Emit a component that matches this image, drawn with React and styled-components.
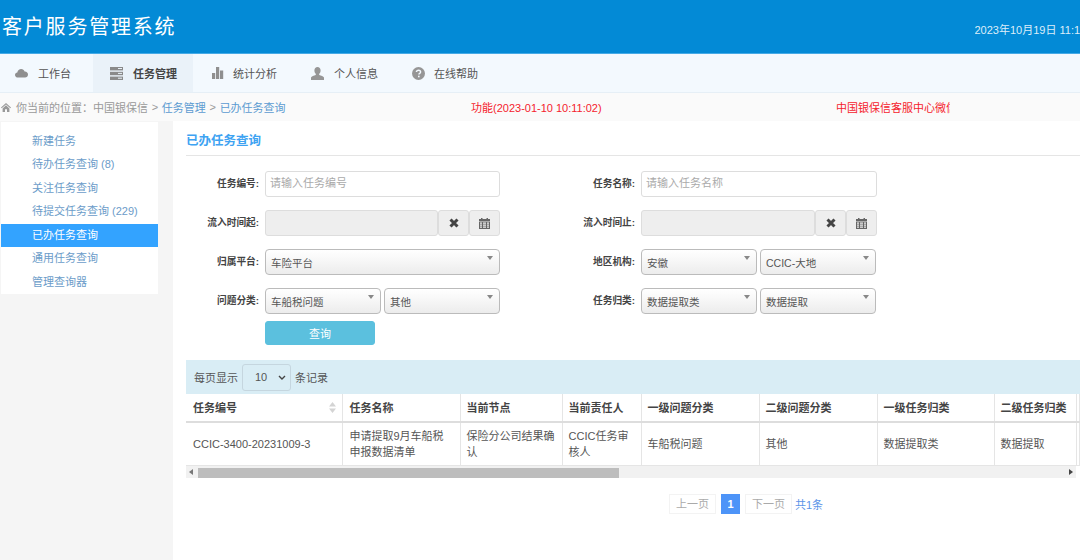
import React from 'react';
import styled, { createGlobalStyle } from 'styled-components';

const NAV_ITEMS = [
	{ label: '工作台', icon: 'cloud' },
	{ label: '任务管理', icon: 'server', active: true },
	{ label: '统计分析', icon: 'bars' },
	{ label: '个人信息', icon: 'user' },
	{ label: '在线帮助', icon: 'help' },
];

const MENU_ITEMS = [
	'新建任务',
	'待办任务查询 (8)',
	'关注任务查询',
	'待提交任务查询 (229)',
	'已办任务查询',
	'通用任务查询',
	'管理查询器',
];

const COLUMNS = [
	{ title: '任务编号', width: 156, value: 'CCIC-3400-20231009-3', sort: true },
	{ title: '任务名称', width: 118, value: '申请提取9月车船税申报数据清单' },
	{ title: '当前节点', width: 102, value: '保险分公司结果确认' },
	{ title: '当前责任人', width: 79, value: 'CCIC任务审核人' },
	{ title: '一级问题分类', width: 118, value: '车船税问题' },
	{ title: '二级问题分类', width: 118, value: '其他' },
	{ title: '一级任务归类', width: 117, value: '数据提取类' },
	{ title: '二级任务归类', width: 82, value: '数据提取' },
];

function NavIcon({ name }) {
	if (name === 'cloud') {
		return (
			<svg width='13' height='10' viewBox='0 0 13 10' fill='#8f8f8f'>
				<path d='M3 9.5C1.3 9.5 0 8.4 0 6.9c0-1.3 1-2.4 2.3-2.5C2.7 2.6 4.2 1 6.2 1c1.6 0 2.9 1 3.4 2.4 1.9-.2 3.4 1.2 3.4 3 0 1.7-1.3 3.1-3 3.1H3z' />
			</svg>
		);
	}
	if (name === 'server') {
		return (
			<svg width='13' height='13' viewBox='0 0 13 13' fill='#8a8a8a'>
				<rect x='0' y='0' width='13' height='3.4' />
				<rect x='0' y='4.8' width='13' height='3.4' />
				<rect x='0' y='9.6' width='13' height='3.4' />
				<rect x='8' y='1' width='4' height='1' fill='#eaf2f9' />
				<rect x='8' y='5.9' width='4' height='1' fill='#eaf2f9' />
				<rect x='8' y='10.7' width='4' height='1' fill='#eaf2f9' />
			</svg>
		);
	}
	if (name === 'bars') {
		return (
			<svg width='14' height='12' viewBox='-2 0 14 12' fill='#8f8f8f'>
				<rect x='0' y='6' width='3.2' height='6' />
				<rect x='4' y='0' width='3.2' height='12' />
				<rect x='8' y='3.5' width='3.2' height='8.5' />
			</svg>
		);
	}
	if (name === 'user') {
		return (
			<svg width='13' height='13' viewBox='0 0 13 13' fill='#969696'>
				<path d='M6.5 0C8.3 0 9.6 1.4 9.6 3.4c0 1.4-.6 2.7-1.4 3.4v1.1c1.9.6 4.3 1.4 4.8 2.5V13H0v-2.6c.5-1.1 2.9-1.9 4.8-2.5V6.8C4 6.1 3.4 4.8 3.4 3.4 3.4 1.4 4.7 0 6.5 0z' />
			</svg>
		);
	}
	return (
		<svg width='14' height='13' viewBox='-1 0 14 13'>
			<circle cx='6.5' cy='6.5' r='6.5' fill='#969696' />
			<path
				d='M4.4 5.1c0-1.2 1-1.9 2.1-1.9 1.2 0 2.1.7 2.1 1.8 0 1.4-1.7 1.4-1.7 2.6'
				fill='none'
				stroke='#f3f9fe'
				strokeWidth='1.4'
			/>
			<rect x='6' y='8.7' width='1.6' height='1.6' fill='#f3f9fe' />
		</svg>
	);
}

function HomeIcon() {
	return (
		<svg width='10' height='9' viewBox='0 0 10 9' fill='#999'>
			<path d='M5 0l5 4.6-.7.7L5 1.4.7 5.3 0 4.6 5 0zM1.6 5.4L5 2.3l3.4 3.1V9H6V6.2H4V9H1.6V5.4z' />
		</svg>
	);
}

function ClearIcon() {
	return (
		<svg width='10' height='10' viewBox='0 0 10 10' fill='none' stroke='#444' strokeWidth='3'>
			<path d='M1.5 1.5l7 7M8.5 1.5l-7 7' />
		</svg>
	);
}

function CalendarIcon() {
	return (
		<svg width='11' height='11' viewBox='0 0 11 11' fill='#666'>
			<rect x='2' y='0' width='1.5' height='1.6' />
			<rect x='7.5' y='0' width='1.5' height='1.6' />
			<rect x='0' y='1' width='11' height='2' />
			<path d='M0 3.6h11V11H0V3.6zm1 1v1.2h2V4.6H1zm3 0v1.2h3V4.6H4zm4 0v1.2h2V4.6H8zM1 6.6v1.2h2V6.6H1zm3 0v1.2h3V6.6H4zm4 0v1.2h2V6.6H8zM1 8.6v1.2h2V8.6H1zm3 0v1.2h3V8.6H4zm4 0v1.2h2V8.6H8z' fillRule='evenodd' />
		</svg>
	);
}

function DateField() {
	return (
		<DateGroup>
			<DateInput />
			<AddOn>
				<ClearIcon />
			</AddOn>
			<AddOn>
				<CalendarIcon />
			</AddOn>
		</DateGroup>
	);
}

function Pick({ value, width }) {
	return <PickBox $width={width}>{value}</PickBox>;
}

export default function App() {
	return (
		<Page>
			<GlobalStyle />
			<Header>
				<Brand>客户服务管理系统</Brand>
				<Clock>2023年10月19日 11:11:25</Clock>
			</Header>

			<Nav>
				{NAV_ITEMS.map((item) => (
					<NavItem key={item.label} $active={item.active}>
						<NavIconBox>
							<NavIcon name={item.icon} />
						</NavIconBox>
						{item.label}
					</NavItem>
				))}
			</Nav>

			<Crumbs>
				<Trail>
					<HomeIcon />
					<span>你当前的位置：中国银保信</span>
					<CrumbSep>&gt;</CrumbSep>
					<CrumbLink>任务管理</CrumbLink>
					<CrumbSep>&gt;</CrumbSep>
					<CrumbLink>已办任务查询</CrumbLink>
				</Trail>
				<Notice>功能(2023-01-10 10:11:02)</Notice>
				<Ticker>中国银保信客服中心微信公众号</Ticker>
			</Crumbs>

			<Body>
				<SideColumn>
					<Menu>
						{MENU_ITEMS.map((item) => (
							<MenuItem key={item} $active={item === '已办任务查询'}>
								{item}
							</MenuItem>
						))}
					</Menu>
				</SideColumn>

				<Main>
					<Title>已办任务查询</Title>

					<Form>
						<Label>任务编号:</Label>
						<TextInput placeholder='请输入任务编号' />
						<Label>任务名称:</Label>
						<TextInput placeholder='请输入任务名称' />

						<Label>流入时间起:</Label>
						<DateField />
						<Label>流入时间止:</Label>
						<DateField />

						<Label>归属平台:</Label>
						<Pick value='车险平台' width={235} />
						<Label>地区机构:</Label>
						<PickPair>
							<Pick value='安徽' width={116} />
							<Pick value='CCIC-大地' width={116} />
						</PickPair>

						<Label>问题分类:</Label>
						<PickPair>
							<Pick value='车船税问题' width={116} />
							<Pick value='其他' width={116} />
						</PickPair>
						<Label>任务归类:</Label>
						<PickPair>
							<Pick value='数据提取类' width={116} />
							<Pick value='数据提取' width={116} />
						</PickPair>
					</Form>

					<SearchRow>
						<SearchButton>查询</SearchButton>
					</SearchRow>

					<TableBar>
						每页显示
						<PageSize>
							10
							<svg width='8' height='5' viewBox='0 0 8 5' fill='none' stroke='#444' strokeWidth='1.4'>
								<path d='M1 1l3 3 3-3' />
							</svg>
						</PageSize>
						条记录
					</TableBar>

					<Table>
						<colgroup>
							{COLUMNS.map((col) => (
								<col key={col.title} width={col.width} />
							))}
							<col />
						</colgroup>
						<thead>
							<tr>
								{COLUMNS.map((col) => (
									<HeadCell key={col.title}>
										{col.title}
										{col.sort && (
											<SortIcon width='7' height='11' viewBox='0 0 7 11' fill='#d4d4d4'>
												<path d='M3.5 0L7 4.4H0zM3.5 11L0 6.6h7z' />
											</SortIcon>
										)}
									</HeadCell>
								))}
								<HeadCell />
							</tr>
						</thead>
						<tbody>
							<tr>
								{COLUMNS.map((col) => (
									<BodyCell key={col.title}>{col.value}</BodyCell>
								))}
								<BodyCell />
							</tr>
						</tbody>
					</Table>

					<Scrollbar>
						<svg width='4' height='6' viewBox='0 0 4 6' fill='#777'>
							<path d='M4 0v6L0 3z' />
						</svg>
						<Thumb />
						<svg width='4' height='6' viewBox='0 0 4 6' fill='#444'>
							<path d='M0 0v6l4-3z' />
						</svg>
					</Scrollbar>

					<Pager>
						<PagerButton>上一页</PagerButton>
						<PagerCurrent>1</PagerCurrent>
						<PagerButton>下一页</PagerButton>
						<PagerTotal>共1条</PagerTotal>
					</Pager>
				</Main>
			</Body>
		</Page>
	);
}

const GlobalStyle = createGlobalStyle`
	html, body {
		margin: 0;
		padding: 0;
		background: #fff;
	}

	* {
		box-sizing: border-box;
	}

	body {
		font-family: 'Liberation Sans', 'Noto Sans CJK SC', sans-serif;
		font-size: 11px;
		color: #555;
	}
`;

const Page = styled.div`
	width: 1080px;
	height: 560px;
	overflow: hidden;
	display: flex;
	flex-direction: column;
`;

const Header = styled.header`
	height: 54px;
	flex: none;
	padding: 0 0 0 2px;
	background: #038ad6;
	border-bottom: 1px solid #45aae6;
	display: flex;
	justify-content: space-between;
	overflow: hidden;
`;

const Brand = styled.h1`
	margin: 12px 0 0;
	font-family: 'Noto Sans CJK SC', sans-serif;
	font-size: 20px;
	line-height: 28px;
	font-weight: 400;
	letter-spacing: 1.8px;
	color: #fff;
`;

const Clock = styled.div`
	width: 105.5px;
	margin-top: 23px;
	font-size: 11px;
	line-height: 14px;
	color: #dcedf9;
	white-space: nowrap;
	overflow: hidden;
`;

const Nav = styled.nav`
	height: 39px;
	flex: none;
	display: grid;
	grid-template-columns: 93px 100px 101px 100px 101px;
	background: #f3f9fe;
	border-bottom: 1px solid #e6eff6;
`;

const NavItem = styled.a`
	display: flex;
	align-items: center;
	padding-left: 17px;
	font-size: 11px;
	font-weight: ${(props) => (props.$active ? 700 : 400)};
	color: ${(props) => (props.$active ? '#444' : '#555')};
	background: ${(props) => (props.$active ? '#eaf2f9' : 'transparent')};

	&:first-child {
		padding-left: 15px;
	}
`;

const NavIconBox = styled.span`
	width: 23px;
	display: flex;
	align-items: center;
`;

const Crumbs = styled.div`
	height: 28px;
	flex: none;
	display: flex;
	align-items: center;
	padding-left: 1px;
	background: #fafafa;
	font-size: 11px;
	color: #999;
`;

const Trail = styled.div`
	width: 470px;
	display: flex;
	align-items: center;
	white-space: pre;

	svg {
		margin-right: 5px;
	}
`;

const CrumbLink = styled.span`
	color: #5c9bd1;
`;

const CrumbSep = styled.span`
	margin: 0 3.7px;
`;

const Notice = styled.div`
	width: 365px;
	color: #f5222d;
`;

const Ticker = styled.div`
	width: 114px;
	overflow: hidden;
	white-space: nowrap;
	color: #f5222d;
`;

const Body = styled.div`
	flex: 1;
	display: flex;
	min-height: 0;
`;

const SideColumn = styled.aside`
	width: 173px;
	flex: none;
	padding: 1px 0 0 1px;
	background: #f5f5f5;
`;

const Menu = styled.ul`
	width: 157px;
	margin: 0;
	padding: 7.5px 0 0;
	height: 172px;
	list-style: none;
	background: #fff;
`;

const MenuItem = styled.li`
	height: 23.5px;
	line-height: 22.5px;
	padding-left: 31px;
	font-size: 11px;
	color: ${(props) => (props.$active ? '#fff' : '#6b9cc9')};
	background: ${(props) => (props.$active ? '#33a3ff' : 'transparent')};
`;

const Main = styled.main`
	flex: 1;
	min-width: 0;
	padding-left: 13px;
	background: #fff;
`;

const Title = styled.h2`
	margin: 0;
	height: 35px;
	padding-top: 11px;
	font-size: 12.5px;
	line-height: 19px;
	font-weight: 700;
	color: #3ea3f2;
	border-bottom: 1px solid #e5e5e5;
`;

const Form = styled.div`
	display: grid;
	grid-template-columns: 73px 235px 129px 236px;
	grid-auto-rows: 26px;
	column-gap: 6px;
	row-gap: 13px;
	margin-top: 15px;
	align-items: center;
`;

const Label = styled.label`
	padding-bottom: 3px;
	font-size: 9.7px;
	font-weight: 700;
	color: #444;
	text-align: right;
	white-space: nowrap;
`;

const TextInput = styled.input`
	width: 100%;
	height: 26px;
	padding: 0 4px 2px;
	border: 1px solid #ddd;
	border-radius: 3px;
	outline: none;
	background: #fff;
	font: 11px 'Liberation Sans', 'Noto Sans CJK SC', sans-serif;

	&::placeholder {
		color: #aaa;
		opacity: 1;
	}
`;

const DateGroup = styled.div`
	display: flex;
	height: 26px;
`;

const DateInput = styled.div`
	flex: 1;
	background: #eee;
	border: 1px solid #ddd;
	border-radius: 3px;
`;

const AddOn = styled.div`
	width: 31px;
	flex: none;
	display: flex;
	align-items: center;
	justify-content: center;
	background: #eee;
	border: 1px solid #ddd;
	border-radius: 3px;
`;

const PickPair = styled.div`
	display: flex;
	gap: 3px;
`;

const PickBox = styled.div`
	position: relative;
	width: ${(props) => props.$width}px;
	height: 26px;
	padding: 0 5px;
	line-height: 26px;
	font-size: 10.5px;
	color: #555;
	white-space: nowrap;
	border: 1px solid #bbb;
	border-radius: 4px;
	background: linear-gradient(to bottom, #fff 0%, #f7f7f7 45%, #ececec 100%);

	&::after {
		content: '';
		position: absolute;
		top: 6px;
		right: 6px;
		border-left: 3px solid transparent;
		border-right: 3px solid transparent;
		border-top: 4px solid #888;
	}
`;

const SearchRow = styled.div`
	margin-top: 7px;
	padding-left: 79px;
`;

const SearchButton = styled.button`
	display: block;
	width: 110px;
	height: 24px;
	padding: 0;
	border: 1px solid #5bc0de;
	border-radius: 3px;
	background: #5bc0de;
	color: #fff;
	font: 11px 'Liberation Sans', 'Noto Sans CJK SC', sans-serif;
`;

const TableBar = styled.div`
	height: 34px;
	margin-top: 15px;
	display: flex;
	align-items: center;
	gap: 4px;
	padding-left: 8px;
	background: #d9edf5;
	font-size: 11px;
	color: #555;
`;

const PageSize = styled.div`
	width: 49px;
	height: 27px;
	display: flex;
	align-items: center;
	justify-content: space-between;
	padding: 0 4px 0 12px;
	border: 1px solid #c5d6df;
	border-radius: 3px;
	background: #d9edf5;
`;

const Table = styled.table`
	width: 894px;
	table-layout: fixed;
	border-collapse: collapse;
	font-size: 11px;
	color: #555;
`;

const HeadCell = styled.th`
	position: relative;
	height: 28px;
	padding: 0 6px 2px;
	text-align: left;
	font-size: 11px;
	font-weight: 700;
	color: #444;
	white-space: nowrap;
	border-right: 1px solid #e5e5e5;
	border-bottom: 2px solid #ddd;

	&:nth-child(-n + 2) {
		padding-left: 7px;
	}
`;

const SortIcon = styled.svg`
	position: absolute;
	right: 6px;
	top: 8px;
`;

const BodyCell = styled.td`
	height: 43px;
	padding: 0 6px;
	line-height: 16px;
	word-break: break-all;
	border-right: 1px solid #e5e5e5;
	border-bottom: 1px solid #e5e5e5;

	&:nth-child(-n + 2) {
		padding-left: 7px;
	}
`;

const Scrollbar = styled.div`
	width: 890px;
	height: 12px;
	display: flex;
	align-items: center;
	justify-content: space-between;
	padding: 0 3px;
	position: relative;
	background: #f1f1f1;
`;

const Thumb = styled.div`
	position: absolute;
	left: 12px;
	top: 2px;
	width: 421px;
	height: 10px;
	background: #bdbdbd;
`;

const Pager = styled.div`
	display: flex;
	align-items: center;
	gap: 5px;
	margin: 16px 0 0 483px;
	height: 20px;
`;

const PagerButton = styled.div`
	width: 47px;
	height: 20px;
	line-height: 18px;
	text-align: center;
	font-size: 11px;
	color: #aaa;
	border: 1px solid #f3f3f3;
`;

const PagerCurrent = styled.div`
	width: 19px;
	height: 20px;
	line-height: 20px;
	text-align: center;
	font-size: 11px;
	font-weight: 700;
	color: #fff;
	background: #4d94f8;
`;

const PagerTotal = styled.div`
	margin-left: -2px;
	font-size: 11px;
	color: #5b94e8;
`;
